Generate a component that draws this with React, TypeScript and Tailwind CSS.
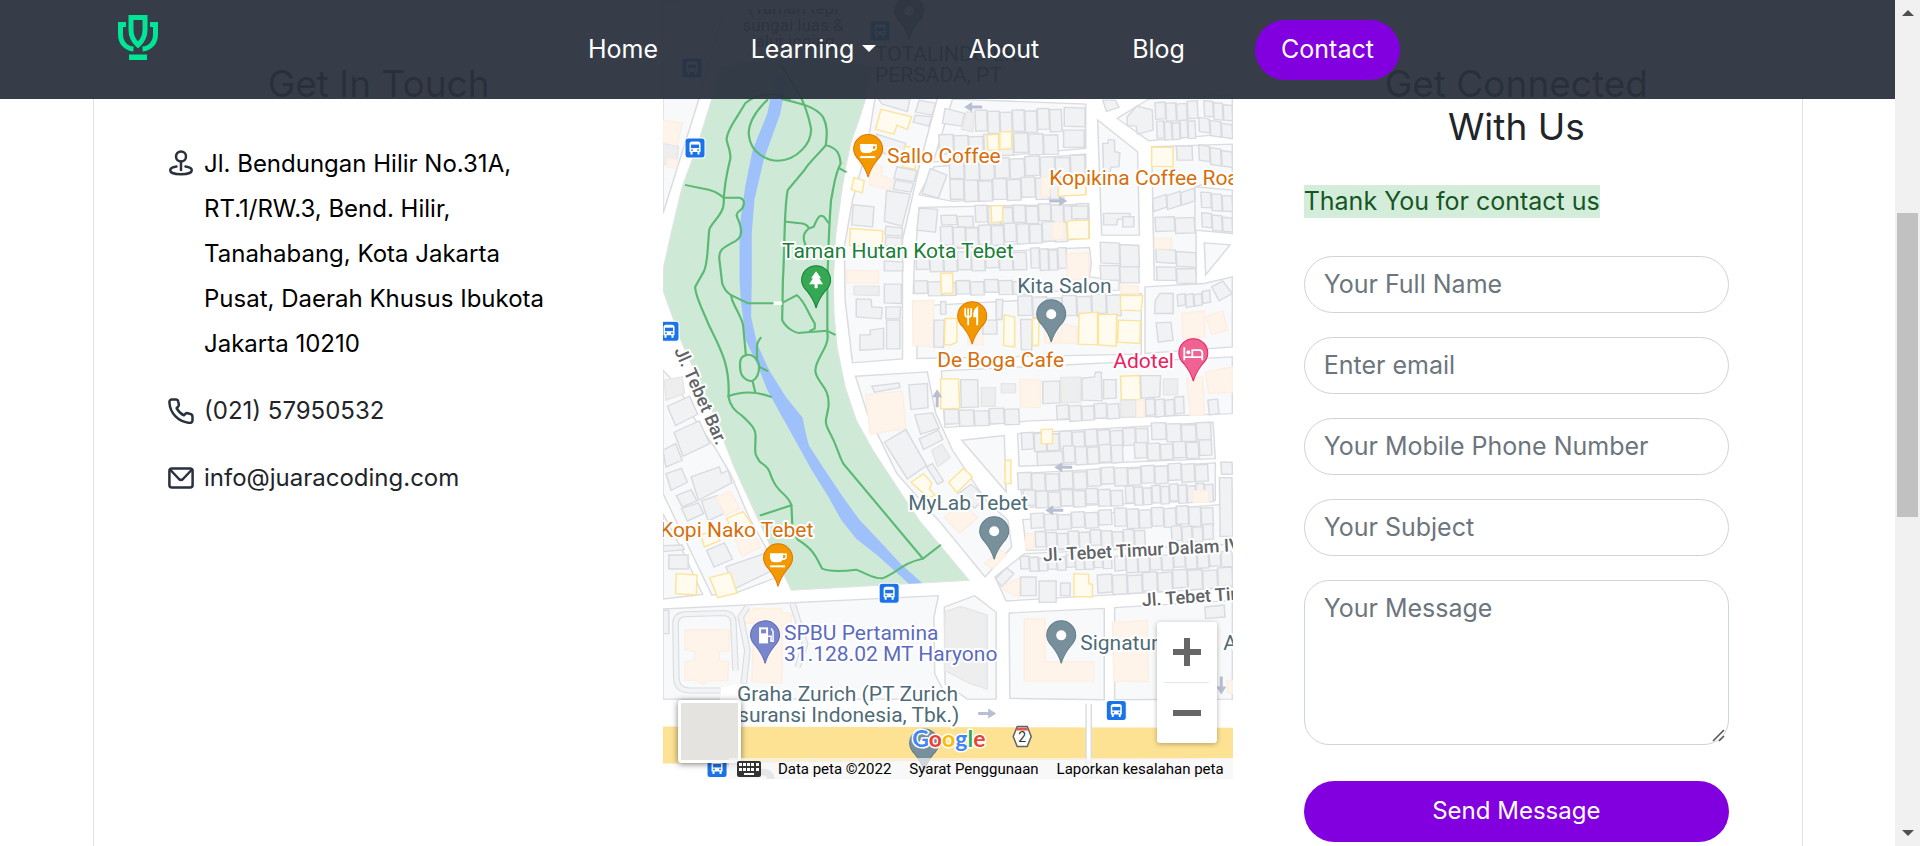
import React from "react";

type Kind = "house" | "shop" | "office" | "plain";

const kindStyle: Record<Kind, { fill: string; stroke: string }> = {
  house: { fill: "#f1f2f4", stroke: "#d9dbe0" },
  shop: { fill: "#fffbef", stroke: "#fde49b" },
  office: { fill: "#fff4ea", stroke: "#fdeee1" },
  plain: { fill: "#eeeeee", stroke: "#e6e6e6" },
};

/* Rows of houses: [x1, y1, x2, y2, depth, count] */
const rows: number[][] = [
  [850, 335, 1085, 328, 66, 7],
  [752, 408, 1075, 400, 62, 8],
  [780, 482, 1148, 466, 62, 9],
  [782, 542, 1090, 532, 64, 8],
  [850, 620, 1158, 612, 54, 9],
  [758, 650, 846, 648, 32, 2],
  [756, 684, 1100, 664, 60, 10],
  [690, 760, 990, 752, 56, 8],
  [1000, 748, 1098, 744, 64, 4],
  [684, 846, 990, 840, 42, 8],
  [965, 892, 1245, 884, 62, 7],
  [766, 1232, 970, 1224, 48, 5],
  [1070, 1220, 1240, 1208, 46, 5],
  [1310, 1202, 1415, 1190, 52, 4],
  [975, 1302, 1318, 1282, 54, 10],
  [1326, 1272, 1488, 1268, 54, 4],
  [1088, 1342, 1250, 1332, 54, 5],
  [1280, 1332, 1490, 1322, 50, 6],
  [965, 1422, 1190, 1410, 54, 6],
  [1190, 1406, 1480, 1388, 54, 8],
  [980, 1474, 1250, 1466, 50, 8],
  [1256, 1462, 1494, 1450, 54, 10],
  [1000, 1544, 1220, 1532, 48, 6],
  [1226, 1528, 1494, 1518, 58, 8],
  [1012, 1598, 1310, 1588, 50, 10],
  [1380, 1582, 1494, 1572, 48, 4],
  [972, 1672, 1220, 1662, 42, 10],
  [1226, 1672, 1546, 1650, 48, 10],
  [1180, 1728, 1546, 1702, 58, 9],
  [1336, 312, 1452, 304, 54, 4],
  [1468, 306, 1546, 312, 50, 3],
  [1340, 368, 1446, 360, 54, 5],
  [1454, 356, 1546, 370, 46, 3],
  [1394, 442, 1438, 442, 46, 1],
  [1454, 438, 1546, 452, 50, 3],
  [1330, 600, 1444, 560, 42, 3],
  [1336, 656, 1444, 652, 46, 2],
  [1460, 580, 1546, 584, 50, 3],
  [1462, 642, 1546, 650, 46, 3],
  [1338, 750, 1448, 758, 44, 2],
  [1340, 804, 1448, 806, 44, 2],
  [1188, 730, 1294, 736, 66, 2],
  [1188, 800, 1294, 800, 48, 2],
  [1396, 888, 1486, 872, 38, 4],
  [1510, 1436, 1546, 1436, 180, 1],
  [1514, 1390, 1546, 1390, 40, 1],
];

function rowPolygons(row: number[], r: number) {
  const [x1, y1, x2, y2, depth, count] = row;
  return Array.from({ length: count }, (_, i) => {
    const jitter = ((i * 7 + r * 5) % 5) * 2 - 4;
    const t0 = i / count;
    const t1 = (i + 1) / count;
    const xa = x1 + (x2 - x1) * t0 + 1;
    const xb = x1 + (x2 - x1) * t1 - 1;
    const ya = y1 + (y2 - y1) * t0 + jitter;
    const yb = y1 + (y2 - y1) * t1 + jitter;
    const d = depth - Math.abs(jitter);
    return `${xa},${ya} ${xb},${yb} ${xb + 2},${yb + d} ${xa + 2},${ya + d}`;
  });
}

const blocks: string[] = [
  "8,0 180,0 105,297 8,640",
  "8,1110 50,1160 90,1250 150,1345 190,1420 240,1550 285,1640 318,1730 200,1780 140,1784 8,1480",
  "8,1540 60,1650 115,1782 8,1796",
  "8,1826 752,1786 740,1850 742,2020 765,2070 800,2096 8,2096",
  "768,1820 850,1786 908,1836 908,2096 830,2096 770,2050",
  "943,1838 1200,1824 1200,2098 945,2094",
  "1228,1822 1546,1800 1546,2096 1228,2098",
  "590,230 765,230 745,310 700,500 655,720 655,1076 520,1088 500,900 498,740 520,600 560,440",
  "790,297 1150,312 1150,445 738,486",
  "740,500 1150,462 1150,582 790,604 700,584",
  "700,622 1158,612 1160,714 690,756",
  "688,764 1160,742 1165,790 1160,830 1240,842 1240,870 684,880",
  "694,918 1300,880 1300,1062 694,1075",
  "528,1128 722,1115 745,1240 790,1350 880,1500 940,1560 950,1640 878,1730 760,1570 640,1420 560,1240",
  "760,1112 1546,1070 1546,1240 1000,1262 770,1282",
  "815,1320 930,1306 935,1475",
  "966,1300 1494,1266 1500,1375 970,1398",
  "965,1420 1500,1388 1500,1500 985,1522",
  "980,1558 1546,1510 1546,1640 990,1650",
  "935,1802 905,1730 985,1660 1546,1632 1546,1762",
  "1182,360 1290,455 1295,705 1193,705",
  "1235,355 1320,297 1546,285 1546,400 1320,422",
  "1328,440 1546,432 1546,520 1448,560 1448,840 1335,840",
  "1445,560 1546,570 1546,700 1445,690",
  "1470,728 1540,734 1474,824",
  "1310,860 1470,850 1546,830 1546,1040 1310,1060",
];

const buildings: [Kind, string][] = [
  ["office", "8,360 60,368 40,470 8,460"],
  ["plain", "8,430 50,440 44,500 8,490"],
  ["office", "20,475 48,480 44,506 18,500"],
  ["shop", "597,328 680,350 668,388 640,375 632,402 582,388"],
  ["house", "590,297 675,297 668,335 600,312"],
  ["house", "700,300 745,310 735,345 690,336"],
  ["house", "690,345 735,350 726,378 684,366"],
  ["house", "585,402 664,430 655,475 590,455"],
  ["shop", "660,440 680,440 676,475 690,478 690,508 655,500"],
  ["office", "568,485 600,500 598,525 630,540 622,570 566,555"],
  ["shop", "524,532 552,542 546,578 517,568"],
  ["house", "640,500 694,512 686,545 632,535"],
  ["house", "636,540 684,550 678,576 630,568"],
  ["house", "612,572 676,582 654,678 606,664"],
  ["house", "522,614 578,620 574,680 518,674"],
  ["shop", "514,685 602,692 600,742 512,736"],
  ["house", "610,678 655,684 654,708 608,704"],
  ["house", "610,710 654,714 654,738 608,736"],
  ["office", "505,810 590,812 590,848 505,848"],
  ["house", "606,782 656,786 656,812 606,812"],
  ["house", "606,852 652,852 652,910 606,908"],
  ["plain", "524,858 592,858 592,886 524,884"],
  ["house", "530,896 570,898 572,920 600,922 598,956 530,950"],
  ["house", "610,920 650,920 648,956 610,956"],
  ["house", "612,960 648,960 648,1046 612,1046"],
  ["house", "568,990 604,984 604,1046 540,1050 540,1004 568,1004"],
  ["house", "770,325 823,340 815,378 763,370"],
  ["plain", "828,335 850,338 845,395 815,388"],
  ["house", "1092,322 1148,324 1148,380 1092,378"],
  ["house", "1090,390 1146,390 1146,442 1090,442"],
  ["shop", "884,405 914,402 916,450 886,450"],
  ["shop", "918,396 950,394 950,446 918,448"],
  ["house", "730,505 775,525 752,594 708,580"],
  ["shop", "1078,535 1150,535 1150,584 1075,588"],
  ["office", "1030,532 1056,532 1052,588 1030,588"],
  ["house", "700,624 750,628 744,696 694,690"],
  ["shop", "894,618 926,616 926,664 896,668"],
  ["shop", "1100,662 1158,660 1158,716 1102,716"],
  ["office", "1060,668 1090,666 1092,716 1060,718"],
  ["house", "1112,618 1156,618 1156,656 1112,656"],
  ["office", "1100,760 1158,758 1158,838 1100,838"],
  ["shop", "758,820 790,818 792,880 760,880"],
  ["office", "682,902 740,900 738,1040 684,1036"],
  ["house", "758,904 772,904 772,942 758,942"],
  ["house", "740,960 768,960 766,1042 740,1040"],
  ["shop", "770,955 802,955 802,1025 785,1035 768,1033"],
  ["office", "832,960 872,960 872,1034 832,1034"],
  ["house", "872,960 910,960 910,1002 872,1002"],
  ["house", "908,898 926,898 924,958 908,958"],
  ["shop", "930,944 958,950 958,1040 928,1036"],
  ["house", "974,958 1006,958 1004,1050 976,1048"],
  ["shop", "1006,955 1024,955 1022,1036 1006,1036"],
  ["office", "1040,965 1076,965 1076,1030 1040,1030"],
  ["office", "1086,970 1126,980 1126,1030 1082,1028"],
  ["shop", "1132,940 1182,936 1182,1034 1130,1032"],
  ["shop", "1184,944 1234,942 1232,1038 1184,1034"],
  ["shop", "1238,960 1298,962 1296,1030 1236,1026"],
  ["shop", "1244,886 1304,886 1300,932 1244,930"],
  ["office", "1244,855 1292,857 1292,880 1244,880"],
  ["house", "1340,968 1380,966 1386,1020 1346,1026"],
  ["house", "1350,880 1386,880 1386,940 1336,940 1338,900"],
  ["office", "1410,940 1470,932 1472,1010 1412,1014"],
  ["office", "1475,950 1520,932 1534,990 1490,1002"],
  ["house", "1490,860 1520,842 1546,880 1510,902"],
  ["shop", "758,1136 806,1136 810,1224 758,1226"],
  ["house", "812,1138 858,1138 860,1220 814,1222"],
  ["plain", "868,1162 906,1162 906,1218 868,1218"],
  ["plain", "922,1150 960,1150 960,1178 922,1178"],
  ["office", "972,1138 1028,1138 1028,1222 974,1220"],
  ["house", "1034,1144 1080,1142 1080,1208 1034,1210"],
  ["plain", "1082,1132 1136,1130 1136,1206 1084,1208"],
  ["house", "1140,1134 1174,1130 1176,1116 1192,1116 1194,1202 1140,1200"],
  ["house", "1198,1138 1232,1138 1232,1194 1198,1196"],
  ["shop", "1244,1128 1296,1126 1298,1198 1246,1198"],
  ["house", "1298,1126 1352,1126 1350,1190 1300,1194"],
  ["plain", "1360,1136 1398,1136 1398,1184 1360,1184"],
  ["office", "1422,1136 1466,1130 1470,1244 1434,1246"],
  ["office", "1474,1116 1546,1100 1546,1176 1482,1180"],
  ["plain", "1244,1200 1286,1200 1286,1250 1244,1250"],
  ["office", "1288,1200 1308,1200 1308,1250 1288,1250"],
  ["house", "1480,1200 1506,1196 1510,1240 1484,1244"],
  ["house", "572,1158 646,1148 648,1162 580,1176"],
  ["office", "556,1184 654,1172 664,1284 568,1302"],
  ["house", "672,1154 722,1150 724,1222 678,1228"],
  ["house", "688,1244 736,1238 754,1284 704,1302"],
  ["house", "606,1326 664,1288 720,1396 668,1436"],
  ["house", "700,1316 752,1290 764,1318 712,1348"],
  ["plain", "734,1350 762,1332 784,1372 750,1400"],
  ["shop", "678,1446 712,1420 734,1448 728,1466 742,1484 726,1494"],
  ["shop", "780,1446 820,1404 844,1430 802,1478"],
  ["house", "720,1400 736,1390 766,1442 750,1452"],
  ["office", "768,1550 818,1510 858,1552 808,1598"],
  ["house", "806,1480 840,1452 880,1490 850,1524"],
  ["shop", "932,1380 948,1380 948,1450 932,1450"],
  ["shop", "1030,1288 1060,1286 1060,1330 1030,1330"],
  ["house", "1018,1356 1086,1352 1090,1392 1020,1396"],
  ["office", "1440,1472 1482,1470 1482,1506 1440,1506"],
  ["office", "988,1600 1010,1600 1010,1646 988,1646"],
  ["office", "876,1690 920,1648 936,1662 900,1704"],
  ["house", "906,1736 936,1702 956,1720 924,1758"],
  ["office", "928,1756 974,1732 970,1790 930,1770"],
  ["house", "974,1730 1016,1730 1016,1786 974,1786"],
  ["house", "1024,1742 1070,1742 1070,1806 1024,1806"],
  ["house", "1082,1748 1108,1748 1108,1786 1082,1786"],
  ["shop", "1118,1720 1158,1722 1158,1750 1168,1752 1168,1790 1118,1788"],
  ["shop", "1328,442 1386,442 1386,500 1328,498"],
  ["office", "1336,714 1382,714 1382,746 1336,746"],
  ["house", "1196,430 1210,430 1212,418 1228,420 1228,455 1242,458 1240,500 1218,502 1216,516 1198,516"],
  ["house", "1198,640 1270,640 1270,656 1236,658 1234,674 1198,674"],
  ["house", "1250,650 1280,650 1280,680 1250,680"],
  ["house", "1196,300 1230,300 1240,322 1206,334"],
  ["house", "1262,350 1288,318 1330,330 1332,390 1290,402 1286,378 1262,376"],
  ["house", "20,1218 80,1188 102,1242 42,1276"],
  ["house", "38,1296 106,1262 134,1330 62,1368"],
  ["plain", "12,1140 60,1130 66,1180 16,1200"],
  ["house", "8,1350 42,1330 60,1380 16,1400"],
  ["house", "16,1420 58,1404 74,1446 30,1470"],
  ["house", "84,1430 160,1400 166,1420 184,1410 194,1448 104,1500"],
  ["house", "44,1486 84,1468 100,1502 60,1520"],
  ["house", "58,1524 104,1508 118,1540 74,1562"],
  ["house", "112,1502 154,1486 172,1540 130,1562"],
  ["office", "152,1490 190,1474 216,1526 176,1546"],
  ["shop", "180,1554 224,1534 248,1572 200,1604"],
  ["shop", "110,1604 150,1590 162,1620 120,1640"],
  ["office", "200,1610 250,1588 272,1640 222,1668"],
  ["house", "126,1650 174,1628 196,1676 146,1700"],
  ["house", "178,1700 282,1660 300,1712 204,1764"],
  ["shop", "134,1732 190,1716 208,1778 156,1792"],
  ["house", "24,1664 76,1664 76,1706 24,1706"],
  ["shop", "44,1720 100,1724 98,1784 42,1780"],
  ["house", "8,1636 60,1634 66,1648 8,1654"],
  ["house", "8,1830 24,1830 24,1900 8,1900"],
  ["office", "68,1888 186,1888 186,1952 160,1954 160,1980 186,1986 182,2040 130,2042 116,2052 100,2040 68,2040 68,1984 94,1978 94,1954 68,1948"],
  ["office", "224,1836 250,1832 252,1824 328,1826 328,1838 356,1840 354,1872 330,1874 330,1988 328,2048 248,2044 250,1988 254,1870 224,1866"],
  ["plain", "770,1834 812,1818 884,1844 884,2066 838,2050 768,2010"],
  ["office", "984,1856 1040,1856 1040,1984 1172,1984 1172,2042 984,2042"],
  ["office", "1222,1866 1316,1860 1318,2044 1226,2042"],
  ["house", "1472,1820 1524,1814 1526,1850 1474,1854"],
  ["office", "1532,2040 1546,2040 1546,2080 1534,2078"],
];

const trails: string[] = [
  "M290,300 C250,340 238,380 240,405 C245,460 290,482 320,482 C370,480 410,430 408,385 C400,340 390,310 375,280 L325,190",
  "M350,297 C300,270 255,285 230,310 C210,350 180,390 180,420 C185,445 192,455 190,475 C180,520 172,560 172,610 C172,645 135,670 133,690 C128,740 130,790 118,815 L95,860 C95,890 120,940 130,970 C160,1040 190,1090 185,1190 C190,1220 205,1235 220,1245 C250,1275 260,1290 258,1310 C258,1360 252,1355 270,1385 C300,1405 295,1420 305,1440 C320,1480 345,1480 355,1515 L358,1590 L372,1618 C420,1650 425,1680 438,1705 C460,1715 500,1712 530,1708 C560,1720 575,1735 600,1734 C640,1720 650,1690 710,1675 L757,1635",
  "M330,297 C380,310 420,320 440,350 C455,380 450,410 448,435 C480,445 485,460 488,490 C470,530 470,560 462,600 C455,700 455,760 452,840 L452,1000 C460,1040 415,1080 420,1115 C425,1150 460,1160 455,1220 C450,1260 440,1260 460,1300 C480,1340 480,1360 495,1390 L710,1675",
  "M70,555 L115,565 Q150,570 172,593 L215,593 C235,600 225,625 215,632 C200,645 210,650 215,670 C225,700 215,715 205,722 C165,745 160,750 160,775 L168,850 C175,870 180,875 192,885 L237,909 H305",
  "M448,435 C430,460 400,490 390,510 L345,570 C335,620 338,720 332,840 L330,960 C345,990 370,1000 380,998 L452,992 L472,1003",
  "M330,908 L370,885 C395,910 395,930 418,970 L418,985 L405,992",
  "M340,665 L385,670 Q400,675 402,685 L415,680 C430,640 435,645 443,650 L455,668 M402,685 C385,700 385,715 395,740 M485,505 L502,515",
  "M192,885 L195,900 C210,940 225,960 225,980 L232,1065 C215,1070 215,1085 217,1110 C220,1135 240,1145 250,1142 C262,1135 268,1115 268,1095 C262,1070 245,1060 232,1065 M250,1142 L257,1175 M185,1188 Q240,1165 300,1190 M262,1080 V1040 Q262,1025 272,1013 M268,1100 L290,1112 M272,1545 L355,1515",
];

const ORANGE = "#f29900";
const SLATE = "#78909c";

type PinGlyph = "cup" | "fork" | "tree" | "bed" | "fuel" | "dot";

const pins: { x: number; y: number; color: string; edge: string; glyph: PinGlyph }[] = [
  { x: 909, y: 11, color: SLATE, edge: "#607d8b", glyph: "dot" },
  { x: 868, y: 149, color: ORANGE, edge: "#e37400", glyph: "cup" },
  { x: 816, y: 280, color: "#34a853", edge: "#188038", glyph: "tree" },
  { x: 972, y: 316, color: ORANGE, edge: "#e37400", glyph: "fork" },
  { x: 1051, y: 314, color: SLATE, edge: "#607d8b", glyph: "dot" },
  { x: 1193, y: 353, color: "#f06292", edge: "#e91e63", glyph: "bed" },
  { x: 994, y: 531, color: SLATE, edge: "#607d8b", glyph: "dot" },
  { x: 778, y: 558, color: ORANGE, edge: "#e37400", glyph: "cup" },
  { x: 765, y: 635, color: "#7986cb", edge: "#5c6bc0", glyph: "fuel" },
  { x: 1061, y: 635, color: SLATE, edge: "#607d8b", glyph: "dot" },
  { x: 924, y: 743, color: SLATE, edge: "#607d8b", glyph: "dot" },
];

function Glyph({ kind }: { kind: PinGlyph }) {
  switch (kind) {
    case "cup":
      return (
        <g>
          <path d="M-8,-5 H5 V-1 Q5,4 0,4 H-3 Q-8,4 -8,-1 Z" fill="#fff" />
          <path d="M4,-4 H8 V-1 Q8,1 4,1" fill="none" stroke="#fff" strokeWidth="1.6" />
          <path d="M-8,8 H7" stroke="#fff" strokeWidth="2" />
        </g>
      );
    case "fork":
      return (
        <g stroke="#fff" fill="none">
          <path d="M-7,-8 V-2 Q-7,1 -4,1 Q-1,1 -1,-2 V-8 M-4,-8 V9" strokeWidth="1.8" />
          <path d="M5,9 V-8 Q2,-6 2,0 H5" strokeWidth="2" fill="#fff" />
        </g>
      );
    case "tree":
      return <path d="M0,-9 L5,-2 H3 L7,4 H1.500 V8 H-1.500 V4 H-7 L-3,-2 H-5 Z" fill="#fff" />;
    case "bed":
      return (
        <g stroke="#fff" fill="none" strokeWidth="1.800">
          <path d="M-9,-6 V7 M-9,4 H9 M9,7 V0 Q9,-3 6,-3 H-1 V3" />
          <circle cx="-5" cy="-1" r="2" fill="#fff" stroke="none" />
        </g>
      );
    case "fuel":
      return (
        <g>
          <path d="M-6,-8 H3 V8 H-6 Z" fill="#fff" />
          <path d="M-4,-6 H1 V-2 H-4 Z" fill="#7986cb" />
          <path d="M3,1 H6 V6 H8 V-4 L6,-7" fill="none" stroke="#fff" strokeWidth="1.500" />
        </g>
      );
    default:
      return <circle r="5" fill="#fff" />;
  }
}

const stops: [number, number][] = [
  [692, 68],
  [880, 31],
  [695, 148],
  [669, 331],
  [889, 593],
  [1116, 710],
  [717, 767],
];

const BROWN = "#d66f0c";
const TEAL = "#4f6b78";

const labels: { x: number; y: number; text: string; color: string }[] = [
  { x: 875, y: 61, text: "TOTALINDO EKA", color: TEAL },
  { x: 875, y: 82, text: "PERSADA, PT", color: TEAL },
  { x: 887, y: 163, text: "Sallo Coffee", color: BROWN },
  { x: 1049, y: 185, text: "Kopikina Coffee Roastery", color: BROWN },
  { x: 782, y: 258, text: "Taman Hutan Kota Tebet", color: "#188038" },
  { x: 1017, y: 293, text: "Kita Salon", color: TEAL },
  { x: 937, y: 367, text: "De Boga Cafe", color: BROWN },
  { x: 1113, y: 368, text: "Adotel", color: "#e91e63" },
  { x: 908, y: 510, text: "MyLab Tebet", color: TEAL },
  { x: 660, y: 537, text: "Kopi Nako Tebet", color: BROWN },
  { x: 784, y: 640, text: "SPBU Pertamina", color: "#5c6bc0" },
  { x: 784, y: 661, text: "31.128.02 MT Haryono", color: "#5c6bc0" },
  { x: 737, y: 701, text: "Graha Zurich (PT Zurich", color: TEAL },
  { x: 738, y: 722, text: "suransi Indonesia, Tbk.)", color: TEAL },
  { x: 1080, y: 650, text: "Signature", color: TEAL },
  { x: 1223, y: 650, text: "A", color: TEAL },
];

const arrows: [number, number, number][] = [
  [973, 107, 180],
  [1058, 201, 0],
  [937, 398, 270],
  [1063, 467, 180],
  [1054, 510, 180],
  [987, 713, 0],
  [1221, 685, 90],
];

function MapCanvas() {
  return (
    <svg
      viewBox="663 0 569 779"
      preserveAspectRatio="xMidYMin slice"
      className="block h-full w-full"
      role="img"
      aria-label="Tebet"
    >
      <rect x="0" y="0" width="1920" height="846" fill="#ffffff" />
      <g transform="translate(660 0) scale(0.37 0.33333)">
        <g fill="#f8f9fb" stroke="#dadce0" strokeWidth="4">
          {blocks.map((points) => (
            <polygon key={points} points={points} />
          ))}
        </g>
        <g fill="#f1f2f4" stroke="#d9dbe0" strokeWidth="4">
          {rows.flatMap((row, r) =>
            rowPolygons(row, r).map((points) => <polygon key={points} points={points} />),
          )}
        </g>
        {buildings.map(([kind, points]) => (
          <polygon
            key={points}
            points={points}
            fill={kindStyle[kind].fill}
            stroke={kindStyle[kind].stroke}
            strokeWidth="4"
          />
        ))}
        <g fill="none" stroke="#dadce0" strokeWidth="18" strokeLinejoin="round">
          <path d="M180,2070 L80,2070 Q44,2070 44,2030 L42,1870 Q42,1845 66,1842 L170,1838 Q196,1838 198,1864 L204,2010" />
          <path d="M236,1820 L218,1850 L236,1950 L226,2050 M358,1810 L392,1930 L372,2000" />
        </g>
        <g fill="none" stroke="#f1f3f4" strokeWidth="12" strokeLinejoin="round">
          <path d="M180,2070 L80,2070 Q44,2070 44,2030 L42,1870 Q42,1845 66,1842 L170,1838 Q196,1838 198,1864 L204,2010" />
          <path d="M236,1820 L218,1850 L236,1950 L226,2050 M358,1810 L392,1930 L372,2000" />
        </g>
        <path d="M165,2060 L180,2060 L205,2050 L240,2120 H160 Z" fill="#ffffff" />
        <path
          d="M165,200 L140,297 100,440 60,560 30,700 10,800 8,870 60,1030 130,1200 200,1400 260,1545 320,1690 355,1770 835,1740 760,1640 700,1560 640,1460 575,1350 530,1260 500,1160 478,1040 470,940 468,840 475,700 490,580 500,510 515,430 540,350 555,297 575,200 Q330,150 165,200 Z"
          fill="#ceead6"
          stroke="#dfe3e3"
          strokeWidth="3"
        />
        <path
          d="M345,220 L325,340 280,480 255,600 248,700 248,840 246,950 262,1030 295,1110 340,1190 385,1252 392,1290 402,1335 440,1400 497,1495 540,1560 600,1630 650,1690 708,1748 672,1750 590,1668 530,1615 490,1560 455,1490 410,1410 370,1330 330,1250 290,1170 265,1100 232,1020 218,900 215,840 215,680 230,560 250,450 290,340 310,230 Z"
          fill="#9fc1fb"
        />
        <g fill="none" stroke="#5bb974" strokeWidth="6" strokeLinejoin="round" strokeLinecap="round">
          {trails.map((d) => (
            <path key={d} d={d} />
          ))}
        </g>
        <path d="M307,909 H330" stroke="#ffffff" strokeWidth="10" />
        <path d="M0,2178 L1560,2182 V2274 L0,2290 Z" fill="#fde293" />
        <path d="M0,2290 L1560,2274 V2400 H0 Z" fill="#ffffff" />
        <path d="M1158,2110 V2340" stroke="#dadce0" strokeWidth="18" />
        <path d="M1158,2105 V2340" stroke="#ffffff" strokeWidth="10" />
        <path d="M260,2315 Q300,2310 300,2340" stroke="#bcc5ca" strokeWidth="20" fill="none" />
      </g>

      {arrows.map(([x, y, angle]) => (
        <g key={`${x}-${y}`} transform={`translate(${x} ${y}) rotate(${angle})`} fill="#b9bfd2">
          <path d="M-9,-1.500 H1 V-5 L9,0 L1,5 V1.500 H-9 Z" />
        </g>
      ))}

      {stops.map(([x, y]) => (
        <g key={`${x}-${y}`} transform={`translate(${x} ${y})`}>
          <rect x="-10" y="-10" width="20" height="20" rx="3" fill="#1a73e8" stroke="#ffffff" strokeWidth="1" />
          <path d="M-5.500,4 V-4 Q-5.500,-6.500 -3,-6.500 H3 Q5.500,-6.500 5.500,-4 V4 H4.500 V6.500 H2.500 V4 H-2.500 V6.500 H-4.500 V4 Z" fill="#ffffff" />
          <path d="M-4,-3.500 H4 V0 H-4 Z" fill="#1a73e8" />
          <circle cx="-3" cy="2" r="0.900" fill="#1a73e8" />
          <circle cx="3" cy="2" r="0.900" fill="#1a73e8" />
        </g>
      ))}

      {pins.map((pin) => (
        <g key={`${pin.x}-${pin.y}`} transform={`translate(${pin.x} ${pin.y})`}>
          <path
            d="M0,28 C-2,20 -5,16 -9,11 C-13,7 -14.500,4 -14.500,0 A14.500,14.500 0 1 1 14.500,0 C14.500,4 13,7 9,11 C5,16 2,20 0,28 Z"
            fill={pin.color}
            stroke={pin.edge}
            strokeWidth="1"
          />
          <Glyph kind={pin.glyph} />
        </g>
      ))}

      <g
        fontFamily="Roboto, 'Liberation Sans', sans-serif"
        fontSize="21"
        stroke="#ffffff"
        strokeWidth="4"
        strokeLinejoin="round"
        paintOrder="stroke"
      >
        {labels.map((label) => (
          <text key={label.text} x={label.x} y={label.y} fill={label.color}>
            {label.text}
          </text>
        ))}
        <g fill="#4f6b78" fontSize="17" textAnchor="middle">
          <text x="793" y="14">(Taman tepi</text>
          <text x="793" y="31">sungai luas &amp;</text>
          <text x="793" y="47">jalur joging</text>
        </g>
        <g fill="#5f6368" fontSize="18" fontWeight="500">
          <text transform="translate(1043 561) rotate(-3)">Jl. Tebet Timur Dalam IV</text>
          <text transform="translate(1142 606) rotate(-4)">Jl. Tebet Timur</text>
          <text transform="translate(674 350) rotate(66)">Jl. Tebet Bar.</text>
        </g>
      </g>
      <path d="M678,0 H892 V9 H678 Z" fill="#ffffff" />

      <g transform="translate(1022 736)">
        <path d="M-5,-10 H5 L9,0 L5,10 H-5 L-9,0 Z" fill="#ffffff" stroke="#5f6368" strokeWidth="1.500" />
        <path d="M-5,-9 H5 L6,-6 H-6 Z" fill="#d95b55" />
        <text y="6" textAnchor="middle" fontFamily="Roboto, sans-serif" fontSize="14" fill="#333333">
          2
        </text>
      </g>

      <text
        x="912"
        y="747"
        fontFamily="Lato, 'Liberation Sans', sans-serif"
        fontSize="23"
        fontWeight="700"
        stroke="#ffffff"
        strokeWidth="3"
        strokeLinejoin="round"
        paintOrder="stroke"
      >
        <tspan fill="#4285f4">G</tspan>
        <tspan fill="#ea4335">o</tspan>
        <tspan fill="#fbbc04">o</tspan>
        <tspan fill="#4285f4">g</tspan>
        <tspan fill="#34a853">l</tspan>
        <tspan fill="#ea4335">e</tspan>
      </text>
    </svg>
  );
}

function KeyboardIcon() {
  return (
    <svg viewBox="0 0 24 16" className="h-4 w-6" aria-hidden="true">
      <rect width="24" height="16" rx="2" fill="#333333" />
      <g fill="#ffffff">
        {[2, 6, 10, 14, 19].map((x) => (
          <React.Fragment key={x}>
            <rect x={x} y="2" width="3" height="3" />
            <rect x={x} y="7" width="3" height="3" />
          </React.Fragment>
        ))}
        <rect x="7" y="12" width="10" height="2" />
      </g>
    </svg>
  );
}

function MapPanel() {
  return (
    <section aria-label="Map" className="relative h-[779px] overflow-hidden">
      <MapCanvas />
      <button
        type="button"
        aria-label="Satellite view"
        className="absolute bottom-4 left-[15px] size-[63px] rounded-[3px] border-3 border-white bg-[#e5e3df] shadow-[0_1px_6px_rgba(0,0,0,0.5)]"
      />
      <div className="absolute right-4 bottom-9 flex w-[60px] flex-col items-center rounded-[3px] bg-white shadow-[0_1px_5px_rgba(0,0,0,0.3)]">
        <button type="button" aria-label="Zoom in" className="flex size-[60px] items-center justify-center">
          <svg viewBox="0 0 28 28" className="size-7" aria-hidden="true">
            <path d="M14 0V28M0 14H28" stroke="#666666" strokeWidth="6" />
          </svg>
        </button>
        <div className="h-px w-[45px] bg-[#e6e6e6]" />
        <button type="button" aria-label="Zoom out" className="flex size-[60px] items-center justify-center">
          <svg viewBox="0 0 28 28" className="size-7" aria-hidden="true">
            <path d="M0 14H28" stroke="#666666" strokeWidth="6" />
          </svg>
        </button>
      </div>
      <div className="absolute right-0 bottom-0 flex h-[21px] items-stretch font-[Roboto,'Liberation_Sans',sans-serif] text-[15px] leading-[22px] text-black">
        <button type="button" aria-label="Keyboard shortcuts" className="flex items-center bg-[#f5f5f5]/70 px-2">
          <KeyboardIcon />
        </button>
        <span className="bg-[#f5f5f5]/70 px-[9px]">Data peta ©2022</span>
        <a href="#syarat" className="bg-[#f5f5f5]/70 px-[9px]">Syarat Penggunaan</a>
        <a href="#laporkan" className="bg-[#f5f5f5]/70 px-[9px]">Laporkan kesalahan peta</a>
      </div>
    </section>
  );
}

function Logo() {
  return (
    <svg viewBox="0 0 40 45" className="h-[45px] w-10" aria-hidden="true">
      <g fill="none" stroke="#00e696" strokeWidth="5">
        <path d="M13 2.500H27V15C27 22 24 26.500 20 30C16 26.500 13 22 13 15Z" />
        <path d="M8 9.500H2.500V19C2.500 28 8 33.500 15.500 34" />
        <path d="M32 9.500H37.500V19C37.500 28 32 33.500 24.500 34" />
      </g>
      <path d="M11 39.500H29V45H11Z" fill="#00e696" />
    </svg>
  );
}

function Header() {
  const link = "flex h-[60px] items-center justify-center";
  return (
    <header className="absolute inset-x-0 top-0 z-10 flex h-[99px] items-start bg-[#29313d]/94 pl-[118px] text-white">
      <a href="#top" aria-label="Juara Coding" className="mt-[15px]">
        <Logo />
      </a>
      <nav className="mt-5 ml-[383px] flex text-[25px]">
        <a href="#home" className={`${link} w-[164px]`}>Home</a>
        <button type="button" className={`${link} w-[217px] gap-2`}>
          Learning
          <svg viewBox="0 0 14 7" className="mb-1 h-[7px] w-3.5" aria-hidden="true">
            <path d="M0 0H14L7 7Z" fill="#ffffff" />
          </svg>
        </button>
        <a href="#about" className={`${link} w-[164px]`}>About</a>
        <a href="#blog" className={`${link} w-[145px]`}>Blog</a>
        <a href="#contact" className={`${link} ml-6 w-[145px] rounded-full bg-[#8200e0]`}>Contact</a>
      </nav>
    </header>
  );
}

function AddressIcon() {
  return (
    <svg viewBox="0 0 26 26" className="mt-[9px] size-[26px] shrink-0" fill="none" stroke="#29313d" strokeWidth="2.5" strokeLinecap="round" aria-hidden="true">
      <circle cx="13" cy="6.500" r="5" />
      <path d="M13 11.500V20" />
      <path d="M8.500 16.500C5 17 2.200 18.300 2.200 20.300C2.200 22.800 7 24.300 13 24.300S23.800 22.800 23.800 20.300C23.800 18.300 21 17 17.500 16.500" />
    </svg>
  );
}

function PhoneIcon() {
  return (
    <svg viewBox="0 0 26 26" className="size-[26px] shrink-0" fill="none" stroke="#29313d" strokeWidth="2.5" strokeLinejoin="round" aria-hidden="true">
      <path d="M24.500 18.900V22.200C24.500 23.900 23.200 25 21.600 24.900C10.500 24 2 15.500 1.400 4.300C1.300 2.600 2.300 1.400 4 1.400H7.700C9 1.400 10 2.200 10.200 3.400L10.800 6.300C11 7.200 10.700 8 10.100 8.600L8.600 10.100C10.200 13.200 12.700 15.800 15.900 17.300L17.300 15.900C17.900 15.300 18.800 15 19.600 15.200L22.500 16C23.700 16.300 24.500 17.500 24.500 18.900Z" />
    </svg>
  );
}

function MailIcon() {
  return (
    <svg viewBox="0 0 26 22" className="h-[22px] w-[26px] shrink-0" fill="none" stroke="#29313d" strokeWidth="2.5" strokeLinejoin="round" aria-hidden="true">
      <rect x="1.400" y="1.400" width="23.200" height="19" rx="2.500" />
      <path d="M2 2.500L11 12C12.200 13.200 13.800 13.200 15 12L24 2.500" />
    </svg>
  );
}

const addressLines = [
  "Jl. Bendungan Hilir No.31A,",
  "RT.1/RW.3, Bend. Hilir,",
  "Tanahabang, Kota Jakarta",
  "Pusat, Daerah Khusus Ibukota",
  "Jakarta 10210",
];

const fields = [
  { id: "name", type: "text", placeholder: "Your Full Name" },
  { id: "email", type: "email", placeholder: "Enter email" },
  { id: "phone", type: "tel", placeholder: "Your Mobile Phone Number" },
  { id: "subject", type: "text", placeholder: "Your Subject" },
];

function GetInTouch() {
  return (
    <section className="pt-[62px]">
      <h2 className="text-center text-[37px] leading-[43px]">Get In Touch</h2>
      <address className="mt-9 flex flex-col gap-[22px] pl-[74px] not-italic">
        <div className="flex gap-2.5 leading-[45px] text-black">
          <AddressIcon />
          <p className="whitespace-nowrap">
            {addressLines.map((line) => (
              <span key={line} className="block">{line}</span>
            ))}
          </p>
        </div>
        <a href="tel:02157950532" className="flex items-center gap-2.5 leading-[45px]">
          <PhoneIcon />
          (021) 57950532
        </a>
        <a href="mailto:info@juaracoding.com" className="flex items-center gap-2.5 leading-[45px]">
          <MailIcon />
          info@juaracoding.com
        </a>
      </address>
    </section>
  );
}

function ContactForm() {
  const box = "w-full border border-[#ced4da] bg-white px-[19px] text-[25px] placeholder:text-[#6c757d]";
  return (
    <section className="pt-[62px] pr-[73px] pl-[71px]">
      <h2 className="text-center text-[37px] leading-[43px]">
        Get Connected
        <br />
        With Us
      </h2>
      <p className="mt-[37px] flex text-[25px]">
        <span className="bg-[#d4edda] leading-[33px] text-[#155724]">Thank You for contact us</span>
      </p>
      <form className="mt-[38px] flex flex-col gap-6" onSubmit={(e) => e.preventDefault()}>
        {fields.map((field) => (
          <div key={field.id} className="flex">
            <label htmlFor={field.id} className="sr-only">{field.placeholder}</label>
            <input id={field.id} type={field.type} placeholder={field.placeholder} className={`${box} h-[57px] rounded-full pb-0.5`} />
          </div>
        ))}
        <div className="relative flex">
          <label htmlFor="message" className="sr-only">Your Message</label>
          <textarea id="message" placeholder="Your Message" className={`${box} h-[165px] resize rounded-[25px] py-[9px] leading-9 [&::-webkit-resizer]:hidden`} />
          <svg viewBox="0 0 13 13" className="pointer-events-none absolute right-1 bottom-[3px] size-[13px]" aria-hidden="true">
            <path d="M1 12L12 1M7 12L12 7" stroke="#505050" strokeWidth="1.500" />
          </svg>
        </div>
        <button type="submit" className="mt-3 h-[61px] rounded-full bg-[#8200e0] pb-0.5 text-white">
          Send Message
        </button>
      </form>
    </section>
  );
}

function Scrollbar() {
  return (
    <div aria-hidden="true" className="flex w-[25px] shrink-0 flex-col items-center justify-between bg-[#f1f1f1] py-2.5">
      <svg viewBox="0 0 12 6" className="h-1.5 w-3">
        <path d="M0 6H12L6 0Z" fill="#505050" />
      </svg>
      <div className="flex w-full grow flex-col px-0.5">
        <div className="grow-[197]" />
        <div className="grow-[304] bg-[#c1c1c1]" />
        <div className="grow-[313]" />
      </div>
      <svg viewBox="0 0 12 6" className="h-1.5 w-3">
        <path d="M0 0H12L6 6Z" fill="#505050" />
      </svg>
    </div>
  );
}

export default function App() {
  return (
    <div className="flex h-screen overflow-hidden bg-white font-[Inter,'Liberation_Sans',sans-serif] text-[24px] text-[#212529]">
      <div className="relative flex grow flex-col">
        <Header />
        <main className="mr-[92px] ml-[93px] grid grow grid-cols-3 border-x border-[#dee2e6]">
          <GetInTouch />
          <MapPanel />
          <ContactForm />
        </main>
      </div>
      <Scrollbar />
    </div>
  );
}
